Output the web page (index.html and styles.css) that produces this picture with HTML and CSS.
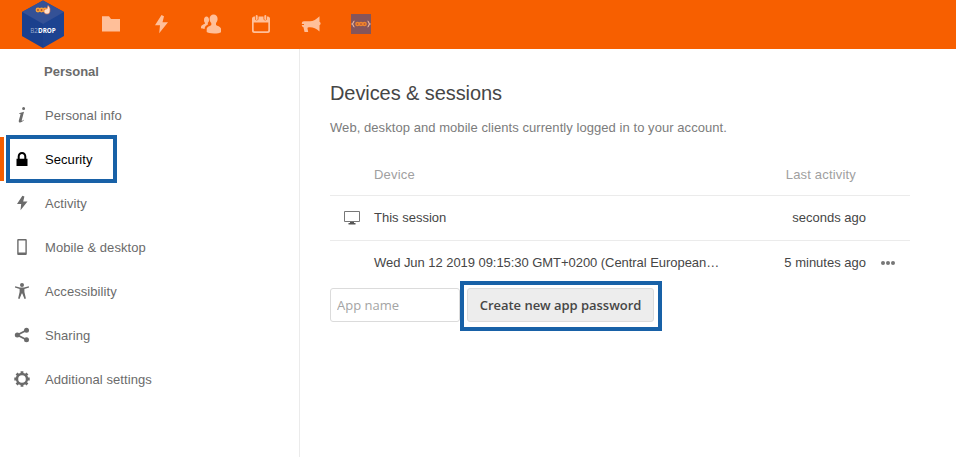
FILE: index.html
```html
<!DOCTYPE html>
<html lang="en">
<head>
<meta charset="utf-8">
<title>Security - B2DROP</title>
<link rel="stylesheet" href="styles.css">
</head>
<body>
<header class="topbar">
  <a class="logo">
    <svg width="42" height="48" viewBox="0 0 42 48">
      <path fill="#1d4391" d="M21 0.5 42 12v24L21 48 0 36V12z"/>
      <path fill="#345196" d="M21 0.5 42 12 21 24 0 12z"/>
      <path fill="#193d87" d="M0 12 21 24v24L0 36z" opacity=".35"/>
      <g fill="#a84d32" stroke="#f6a13a" stroke-width="1.5"><circle cx="16" cy="10" r="1.7"/><circle cx="19.6" cy="10" r="1.7"/><circle cx="23" cy="10" r="1.7"/></g>
      <path fill="#ffe1ce" stroke="#ef7b3e" stroke-width=".6" d="M26 5.500c2 2 2 3 2 4.500 0 3-1 4-3 4s-3-1-3-3c0-1.500 1.500-2 3-2z"/>
      <text class="logo-text" x="8.300" y="32.600" textLength="25.500" lengthAdjust="spacingAndGlyphs"><tspan fill="#9aa9cc" font-weight="400">B2</tspan>DROP</text>
    </svg>
  </a>
  <nav class="apps">
    <a><svg width="20" height="20" viewBox="0 0 20 20"><path d="M1 2.300h7l2 2.700h9v12.500H1z"/></svg></a>
    <a><svg width="20" height="20" viewBox="0 0 20 20"><path d="M10.500 1 4 11.300h5L8.200 19.200 17 8.300h-5.500l1.500-6z"/></svg></a>
    <a><svg width="20" height="20" viewBox="0 0 20 20"><path d="M12.600.6c2.300 0 4 1.700 4 4.300 0 1.800-.8 3-1.600 4v2.200c1.500 1 5.200 1.700 5.200 4.500V18c-1 .9-3.700 1.500-7.200 1.500-3.800 0-6.500-.8-7.300-1.500v-2.700c0-2.500 3.300-3 4.600-4.200V8.900c-1-1-1.700-2.200-1.700-4 0-2.600 1.700-4.300 4-4.300zM5.500 2.500C7 2.500 8 4 8 6c0 1.300-.5 2.200-1.200 2.800l.1 1.700c-1.500.9-3.400 2-3.300 4.500-1.800-.1-3.600-.5-3.600-1v-1c0-2 2.500-2.500 3.900-3.300V8.800C3.400 8.200 3 7.300 3 6c0-2 1-3.500 2.500-3.500z"/></svg></a>
    <a><svg width="20" height="20" viewBox="0 0 20 20"><path fill-rule="evenodd" d="M3 2.500h1v2.200c0 2.300 3.500 2.300 3.500 0V2.500h5v2.200c0 2.300 3.500 2.300 3.500 0V2.500h1c1 0 2 1 2 2V17c0 1-1 2-2 2H3c-1 0-2-1-2-2V4.500c0-1 1-2 2-2zm-.3 6V16c0 .8.500 1.300 1.300 1.300h12c.8 0 1.300-.5 1.300-1.300V8.500z"/><rect x="4.700" y="1" width="2" height="5" rx="1"/><rect x="13.300" y="1" width="2" height="5" rx="1"/></svg></a>
    <a><svg width="20" height="20" viewBox="0 0 20 20"><path d="M18.500 2.200v5.600c1.500.5 1.500 3 0 3.500v6.200c-3.500-3.200-6-4-9.500-4.200-2 0-2.500.2-2.500 1.200l.7 3.500H3.500l-1-4.800C1 13 .8 11.500.8 11H3v-1H.8C.8 8 1.500 7.300 3 7.300h6c3 0 6.500-2 9.500-5.100z"/></svg></a>
    <a><svg width="20" height="20" viewBox="0 0 20 20"><path fill="#85555a" d="M0 0h20v20H0z"/><path fill="none" stroke="#e8b6a0" stroke-width="1.200" d="M3.500 7c-1.500 0-.8 2.500-2.300 3 1.500.5.800 3 2.300 3M16.500 7c1.500 0 .8 2.500 2.300 3-1.500.5-.8 3-2.300 3"/><g fill="#b14e35" stroke="#ef852d" stroke-width="1.500"><circle cx="6.500" cy="10" r="1.600"/><circle cx="10" cy="10" r="1.600"/><circle cx="13.500" cy="10" r="1.600"/></g></svg></a>
  </nav>
</header>
<div class="layout">
  <aside class="sidebar">
    <h2 class="caption">Personal</h2>
    <ul class="menu">
      <li><svg viewBox="0 0 16 16"><path d="M9.600 0a1.500 1.500 0 1 1 0 3 1.500 1.500 0 0 1 0-3zM5 6.200l5-1.500-2.200 8.200c-.2 1 .1 1.300.8.7l1-.9.4.4c-2.100 2.900-6.100 3.700-5.100.2l1.500-5.600c.2-.8-.2-.9-1.300-.9z"/></svg><span>Personal info</span></li>
      <li class="active"><svg viewBox="0 0 16 16"><path fill-rule="evenodd" d="M8 1C5.500 1 3.700 3 3.700 5.500v2.300H2.500V15h11V7.800h-1.200V5.500C12.300 3 10.500 1 8 1zm0 2c1.400 0 2.300 1 2.300 2.500v2.300H5.700V5.500C5.700 4 6.600 3 8 3z"/></svg><span>Security</span></li>
      <li><svg viewBox="0 0 16 16"><path d="M8.400.8 3 9h4.200l-.7 6.300L13.500 6.600H9.200l1.200-5z"/></svg><span>Activity</span></li>
      <li><svg viewBox="0 0 16 16"><path fill-rule="evenodd" d="M4.500 0h7c.8 0 1.300.5 1.300 1.300v13.400c0 .8-.5 1.300-1.300 1.300h-7c-.8 0-1.300-.5-1.300-1.300V1.300C3.200.5 3.700 0 4.500 0zm.1 1.600v12h6.800v-12z"/></svg><span>Mobile &amp; desktop</span></li>
      <li><svg viewBox="0 0 16 16"><circle cx="8" cy="2" r="2"/><path d="M1.200 3.300 6 4.500h4l4.800-1.200.3 1.200-4.700 1.400v3l1.500 6.600-1.400.5L8.300 10.500h-.6L5.500 16l-1.400-.5 1.500-6.600v-3L.9 4.500z"/></svg><span>Accessibility</span></li>
      <li><svg viewBox="0 0 16 16"><circle cx="3.300" cy="8" r="2.500"/><circle cx="12.500" cy="3.300" r="2.500"/><circle cx="12.500" cy="12.700" r="2.500"/><path fill="none" stroke="currentColor" stroke-width="1.800" d="M12.500 3.300 3.300 8l9.200 4.700"/></svg><span>Sharing</span></li>
      <li><svg viewBox="0 0 16 16"><circle cx="8" cy="8" r="5" fill="none" stroke="currentColor" stroke-width="2.400"/><g stroke="currentColor" stroke-width="2.800"><path d="M8 .3v2.500M8 13.200v2.500M.3 8h2.500M13.200 8h2.500M2.600 2.600l1.700 1.700M11.700 11.700l1.700 1.700M2.600 13.400l1.700-1.700M11.700 4.300l1.700-1.700"/></g></svg><span>Additional settings</span></li>
    </ul>
  </aside>
  <main class="content">
    <h1>Devices &amp; sessions</h1>
    <p class="hint">Web, desktop and mobile clients currently logged in to your account.</p>
    <div class="sessions">
      <div class="row head"><span></span><span>Device</span><span class="when">Last activity</span><span></span></div>
      <div class="row"><span class="icon"><svg width="16" height="16" viewBox="0 0 16 16"><path fill="none" stroke="#777" d="M.5 1.500h15v10H.5z"/><path fill="#555" d="M6 12h4v1h1.500v1.500h-7V13H6z"/></svg></span><span>This session</span><span class="when">seconds ago</span><span></span></div>
      <div class="row last"><span></span><span class="name">Wed Jun 12 2019 09:15:30 GMT+0200 (Central European…</span><span class="when">5 minutes ago</span><span class="more"><svg width="16" height="16" viewBox="0 0 16 16" fill="#777"><circle cx="3" cy="8" r="2"/><circle cx="8" cy="8" r="2"/><circle cx="13" cy="8" r="2"/></svg></span></div>
    </div>
    <form class="create">
      <input type="text" placeholder="App name">
      <div class="marked"><button type="button">Create new app password</button></div>
    </form>
  </main>
</div>
</body>
</html>
```
FILE: styles.css
```css
*, *::after { box-sizing: border-box; }
body {
  margin: 0;
  height: 457px;
  overflow: hidden;
  background: #fff;
  color: #464646;
  font: 13px/20px "Liberation Sans", Arial, sans-serif;
}
.topbar {
  display: flex;
  height: 49px;
  padding-left: 22px;
  background: #f75f00;
}
.logo { width: 42px; height: 48px; }
.logo svg { display: block; }
.logo-text { font: bold 7px "Open Sans", sans-serif; fill: #fff; }
.apps { display: flex; margin-left: 22px; }
.apps a {
  display: flex;
  align-items: center;
  justify-content: center;
  width: 50px;
  height: 48px;
}
.apps svg { fill: #ffbf99; }
.layout { display: flex; height: 408px; }
.sidebar {
  width: 300px;
  border-right: 1px solid #ebebeb;
  color: #6b6b6b;
}
.caption {
  margin: 0;
  padding-left: 44px;
  font-size: 13px;
  line-height: 45px;
  height: 44px;
}
.menu { margin: 0; padding: 0; list-style: none; letter-spacing: 0.07px; }
.menu li {
  position: relative;
  display: flex;
  align-items: center;
  gap: 15px;
  height: 44px;
  padding-left: 14px;
  line-height: 44px;
}
.menu span { padding-top: 1px; }
.menu svg { width: 16px; height: 16px; fill: currentColor; }
.menu .active { color: #000; box-shadow: inset 4px 0 #f75f00; }
.menu .active::after {
  content: "";
  position: absolute;
  left: 6px;
  top: -2px;
  width: 111px;
  height: 48px;
  border: 4px solid #1861a7;
}
.content { width: 610px; padding: 29px 0 0 30px; }
h1 {
  margin: 0;
  font-size: 20px;
  font-weight: 400;
  line-height: 30px;
  letter-spacing: -0.08px;
}
.hint { margin: 10px 0 0; color: #7c7c7c; letter-spacing: 0.06px; }
.sessions { margin-top: 16px; }
.row {
  display: grid;
  grid-template-columns: 44px 1fr 130px 44px;
  align-items: center;
  height: 45px;
  border-bottom: 1px solid #ebebeb;
}
.head { height: 42px; color: #a0a0a0; letter-spacing: 0.18px; }
.head .when { padding-right: 10px; }
.when { text-align: right; }
.name { white-space: nowrap; letter-spacing: -0.05px; }
.last { height: 43px; border: 0; }
.icon { padding-left: 14px; }
.icon svg, .more svg { display: block; }
.more { padding-left: 14px; }
.create { display: flex; margin-top: -3px; }
input {
  width: 130px;
  height: 34px;
  margin-top: 7px;
  padding: 0 6px;
  border: 1px solid #dbdbdb;
  border-radius: 3px;
  font: 13px "Open Sans", sans-serif;
}
input::placeholder { color: #a4a4a4; opacity: 1; }
.marked {
  width: 202px;
  height: 50px;
  padding: 3px;
  border: 4px solid #1861a7;
}
button {
  display: block;
  width: 187px;
  height: 34px;
  padding: 0;
  border: 1px solid #dbdbdb;
  border-radius: 3px;
  background: #ededed;
  color: #464646;
  font: 600 13px "Open Sans", sans-serif;
  letter-spacing: -0.03px;
}
```
